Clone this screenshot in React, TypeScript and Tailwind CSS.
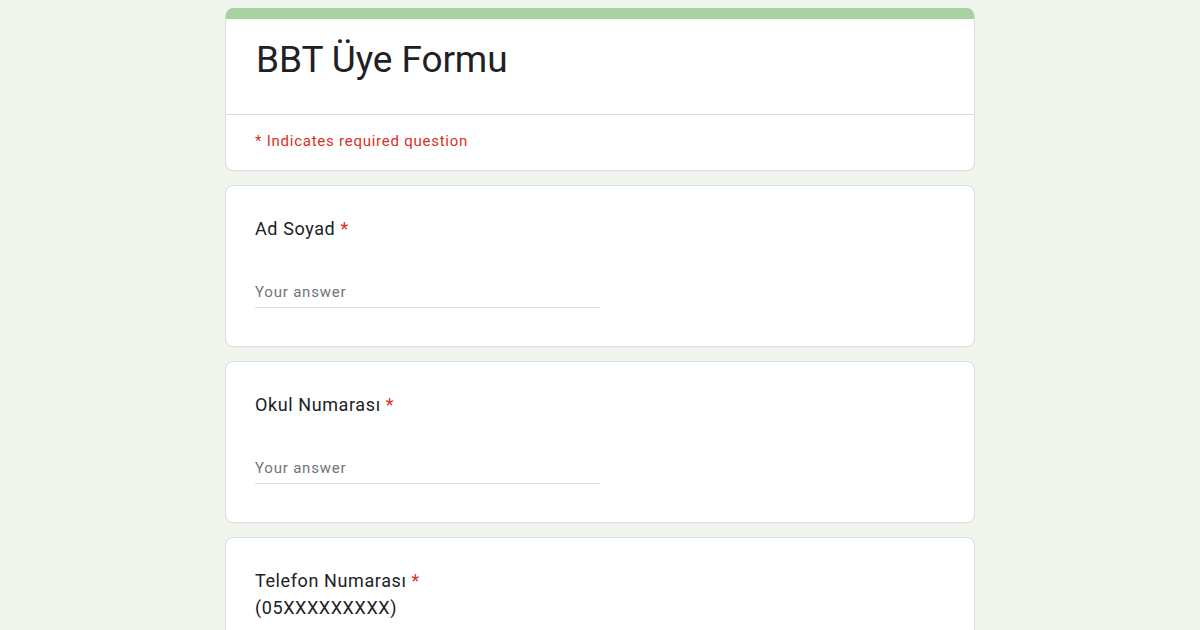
const questions = [
  { id: 1, label: "Ad Soyad", note: "" },
  { id: 2, label: "Okul Numarası", note: "" },
]

function QuestionCard({ label, note, withInput = true }: { label: string; note?: string; withInput?: boolean }) {
  return (
    <div className="bg-white border border-[#dadce0] rounded-lg px-[29px] pt-[29px] pb-[38px]">
      <div className="text-[18px] leading-[27px] tracking-[0.6px] text-[#202124]">
        {label} <span className="text-[#d93025]">*</span>
        {note && <div>{note}</div>}
      </div>
      {withInput && (
        <div className="mt-[40px] w-[345px] border-b border-[#e0e0e0] pb-[5px] text-[15px] leading-[20px] tracking-[0.8px] text-[#70757a]">
          Your answer
        </div>
      )}
    </div>
  )
}

export default function App() {
  return (
    <div className="min-h-screen bg-[#f0f6ee] font-['Roboto',sans-serif] pt-[8px]">
      <div className="w-[750px] mx-auto flex flex-col gap-[14px]">
        <div className="bg-white border border-[#dadce0] border-t-0 rounded-lg overflow-hidden">
          <div className="h-[11px] bg-[#a8d1a0]" />
          <div className="px-[30px] pt-[17px] pb-[30px] border-b border-[#dadce0]">
            <h1 className="text-[37px] leading-[48px] text-[#202124] tracking-[-0.1px]">BBT Üye Formu</h1>
          </div>
          <div className="px-[29px] pt-[16px] pb-[19px] text-[15px] leading-[20px] tracking-[0.75px] text-[#d93025]">
            * Indicates required question
          </div>
        </div>
        {questions.map((q) => (
          <QuestionCard key={q.id} label={q.label} />
        ))}
        <QuestionCard label="Telefon Numarası" note="(05XXXXXXXXX)" />
      </div>
    </div>
  )
}
